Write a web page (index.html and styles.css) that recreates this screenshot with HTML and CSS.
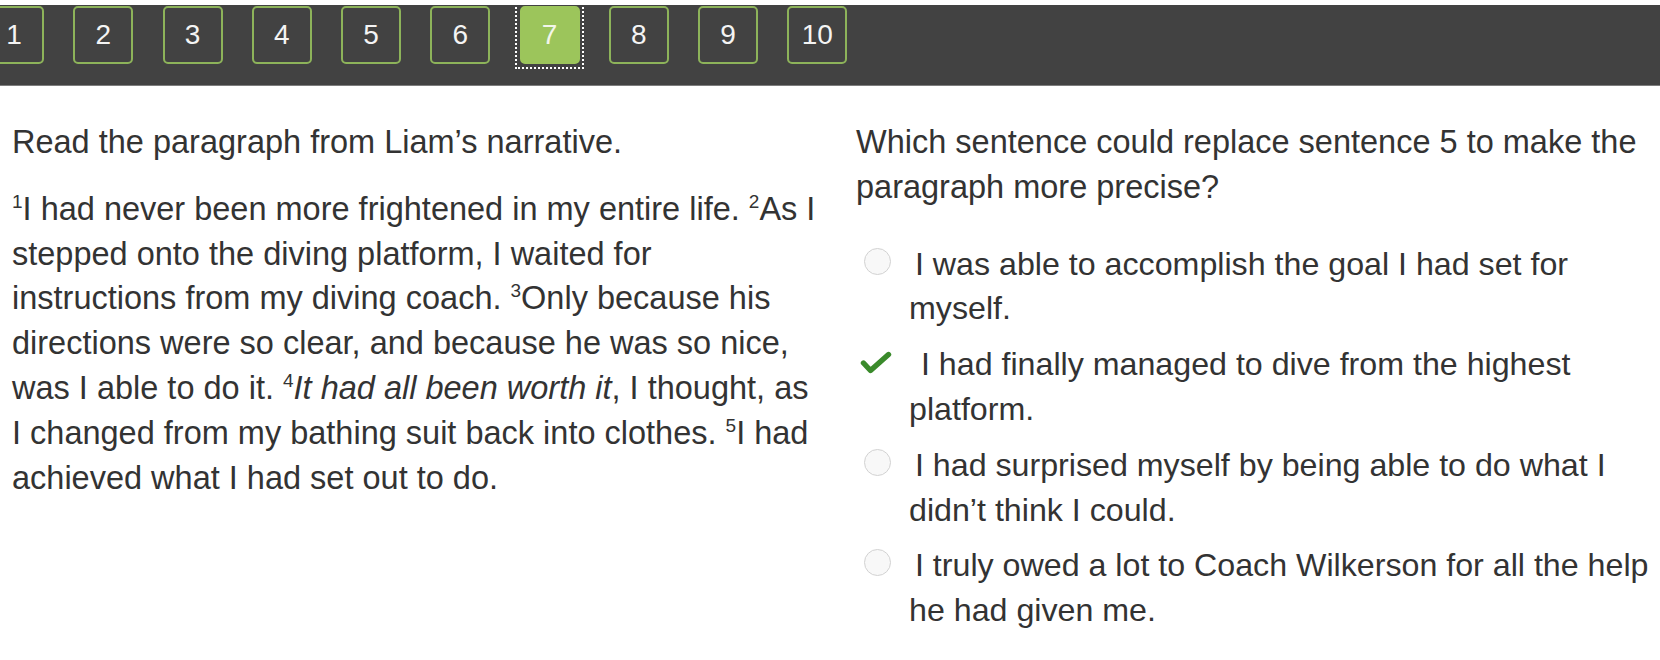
FILE: index.html
```html
<!DOCTYPE html>
<html lang="en">
<head>
<meta charset="utf-8">
<title>Question 7</title>
<link rel="stylesheet" href="styles.css">
</head>
<body>
<nav class="topbar">
  <div class="pager">
    <button class="page">1</button>
    <button class="page">2</button>
    <button class="page">3</button>
    <button class="page">4</button>
    <button class="page">5</button>
    <button class="page">6</button>
    <button class="page current">7</button>
    <button class="page">8</button>
    <button class="page">9</button>
    <button class="page">10</button>
  </div>
</nav>
<main class="content">
  <section class="passage">
    <p class="lead">Read the paragraph from Liam’s narrative.</p>
    <p class="para"><sup>1</sup>I had never been more frightened in my entire life. <sup>2</sup>As I stepped onto the diving platform, I waited for instructions from my diving coach. <sup>3</sup>Only because his directions were so clear, and because he was so nice, was I able to do it. <sup>4</sup><em>It had all been worth it</em>, I thought, as I changed from my bathing suit back into clothes. <sup>5</sup>I had achieved what I had set out to do.</p>
  </section>
  <section class="question">
    <p class="prompt">Which sentence could replace sentence 5 to make the paragraph more precise?</p>
    <ul class="options">
      <li class="option">
        <span class="mark"><span class="radio"></span></span>
        <span class="text"> I was able to accomplish the goal I had set for myself.</span>
      </li>
      <li class="option chosen">
        <span class="mark"><svg class="check" width="32" height="26" viewBox="0 0 32 26"><path d="M3.5 13 L10.5 20.5 L28.5 4.5" fill="none" stroke="#3a8a2b" stroke-width="5.4" stroke-linecap="round" stroke-linejoin="round"/></svg></span>
        <span class="text"> I had finally managed to dive from the highest platform.</span>
      </li>
      <li class="option">
        <span class="mark"><span class="radio"></span></span>
        <span class="text"> I had surprised myself by being able to do what I didn’t think I could.</span>
      </li>
      <li class="option">
        <span class="mark"><span class="radio"></span></span>
        <span class="text"> I truly owed a lot to Coach Wilkerson for all the help he had given me.</span>
      </li>
    </ul>
  </section>
</main>
</body>
</html>
```
FILE: styles.css
```css
html, body {
  margin: 0;
  background: #ffffff;
}
body {
  padding-top: 5px;
  font-family: "Liberation Sans", Arial, Helvetica, sans-serif;
  color: #333333;
  overflow: hidden;
}
.topbar {
  background: #424242;
  height: 80px;
  border-bottom: 1px solid #7d7d7d;
  overflow: hidden;
}
.pager {
  display: flex;
  align-items: flex-start;
  gap: 29.25px;
  margin-left: -16px;
  padding-top: 1px;
}
.page {
  position: relative;
  flex: 0 0 auto;
  width: 60px;
  height: 58px;
  box-sizing: border-box;
  border: 2px solid #8db35a;
  border-radius: 5px;
  background: #424242;
  color: #f4f4f4;
  font-family: "Liberation Sans", Arial, Helvetica, sans-serif;
  font-size: 28px;
  padding: 0;
  line-height: 1;
}
.page.current {
  background: #9cc55b;
  border-color: #9cc55b;
  color: #f3f6ea;
}
.page.current::after {
  content: "";
  position: absolute;
  left: -7px;
  right: -6px;
  top: -10px;
  bottom: -7px;
  border: 2px dotted #ffffff;
}
.content {
  display: grid;
  grid-template-columns: 809px 1fr;
  column-gap: 35px;
  padding: 34px 0 0 12px;
  font-size: 32.5px;
  line-height: 44.8px;
}
.content p {
  margin: 0;
}
.lead {
  margin-bottom: 22px !important;
}
.para sup {
  font-size: 19px;
  line-height: 0;
  vertical-align: 12px;
}
.prompt {
  margin-bottom: 32px !important;
}
.options {
  list-style: none;
  margin: 0;
  padding: 0;
  display: flex;
  flex-direction: column;
  gap: 11px;
  font-size: 32.2px;
}
.option {
  display: grid;
  grid-template-columns: 53px 1fr;
}
.mark {
  padding-left: 8px;
}
.radio {
  display: block;
  width: 27px;
  height: 27px;
  box-sizing: border-box;
  margin-top: 6px;
  border-radius: 50%;
  border: 1.5px solid #d2d2d2;
  background: #f8f8f8;
}
.check {
  display: block;
  margin-top: 8px;
  margin-left: -4px;
}
.text {
  white-space: pre-wrap;
  text-indent: -3px;
}
.chosen .text {
  text-indent: 3px;
}
```
